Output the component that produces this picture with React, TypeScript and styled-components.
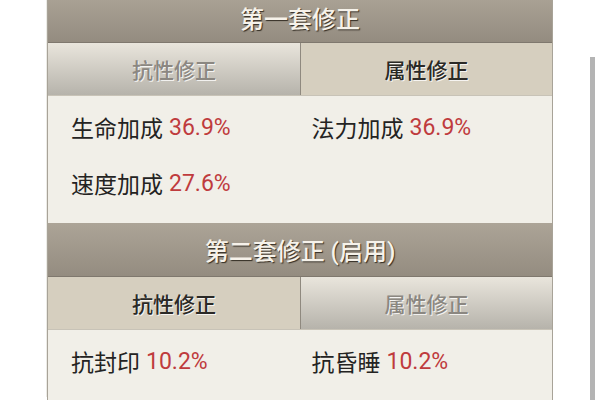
import React from "react";
import styled, { createGlobalStyle } from "styled-components";

const GlobalStyle = createGlobalStyle`
  html, body {
    margin: 0;
    padding: 0;
    background: #ffffff;
  }
  body {
    font-family: "Roboto", "Noto Sans CJK SC", sans-serif;
  }
`;

const Page = styled.div`
  width: 600px;
  height: 400px;
  overflow: hidden;
  display: flex;
  align-items: flex-start;
  padding-left: 47px;
  box-sizing: border-box;
`;

const Panel = styled.div`
  width: 506px;
  flex-shrink: 0;
  margin-top: -7px;
  border-left: 1px solid #a8a398;
  border-right: 1px solid #a8a398;
  box-sizing: border-box;
  box-shadow: -5px 0 0 -4px #ecebe6;
`;

const Header = styled.div<{ $height: number }>`
  height: ${(p) => p.$height}px;
  display: flex;
  align-items: center;
  justify-content: center;
  background: linear-gradient(#aca497, #948c80);
  border-bottom: 1px solid #7f786e;
  box-sizing: border-box;
  color: #f6f2ea;
  font-size: 24px;
  font-weight: 500;
  text-shadow: 1px 1px 1px rgba(40, 34, 26, 0.9);
`;

const Tabs = styled.div`
  display: grid;
  grid-template-columns: 1fr 1fr;
  height: 53px;
  border-bottom: 1px solid #c8c3b7;
  box-sizing: border-box;
`;

const Tab = styled.div<{ $active?: boolean }>`
  display: flex;
  align-items: center;
  justify-content: center;
  font-size: 21px;
  font-weight: 500;
  background: ${(p) =>
    p.$active ? "#d6cfbf" : "linear-gradient(#e9e5dc, #b6b3ab)"};
  color: ${(p) => (p.$active ? "#2a2926" : "#8b8781")};
  text-shadow: 1px 1px 0 rgba(255, 255, 255, 0.8);

  & + & {
    border-left: 1px solid #8f897f;
  }
`;

const Content = styled.div`
  display: grid;
  grid-template-columns: 1fr 1fr;
  grid-auto-rows: 56px;
  padding: 3px 0 12px 23px;
  background: #f1efe8;
`;

const Stat = styled.div`
  display: flex;
  align-items: center;
  gap: 6px;
  font-size: 23px;
  color: #242322;
`;

const Value = styled.span`
  color: #bf3b3d;
`;

const ScrollTrack = styled.div`
  width: 5px;
  height: 360px;
  margin-top: 57px;
  margin-left: 37px;
  background: #b4b4b4;
  flex-shrink: 0;
`;

interface StatItem {
  label: string;
  value: string;
}

interface SectionProps {
  title: string;
  headerHeight: number;
  activeTab: 0 | 1;
  stats: StatItem[];
}

const tabNames = ["抗性修正", "属性修正"];

const Section: React.FC<SectionProps> = ({ title, headerHeight, activeTab, stats }) => (
  <>
    <Header $height={headerHeight}>{title}</Header>
    <Tabs>
      {tabNames.map((name, i) => (
        <Tab key={name} $active={i === activeTab}>
          {name}
        </Tab>
      ))}
    </Tabs>
    <Content>
      {stats.map((s) => (
        <Stat key={s.label}>
          {s.label}
          <Value>{s.value}</Value>
        </Stat>
      ))}
    </Content>
  </>
);

const App: React.FC = () => (
  <>
    <GlobalStyle />
    <Page>
      <Panel>
        <Section
          title="第一套修正"
          headerHeight={50}
          activeTab={1}
          stats={[
            { label: "生命加成", value: "36.9%" },
            { label: "法力加成", value: "36.9%" },
            { label: "速度加成", value: "27.6%" },
          ]}
        />
        <Section
          title="第二套修正 (启用)"
          headerHeight={54}
          activeTab={0}
          stats={[
            { label: "抗封印", value: "10.2%" },
            { label: "抗昏睡", value: "10.2%" },
          ]}
        />
      </Panel>
      <ScrollTrack />
    </Page>
  </>
);

export default App;
